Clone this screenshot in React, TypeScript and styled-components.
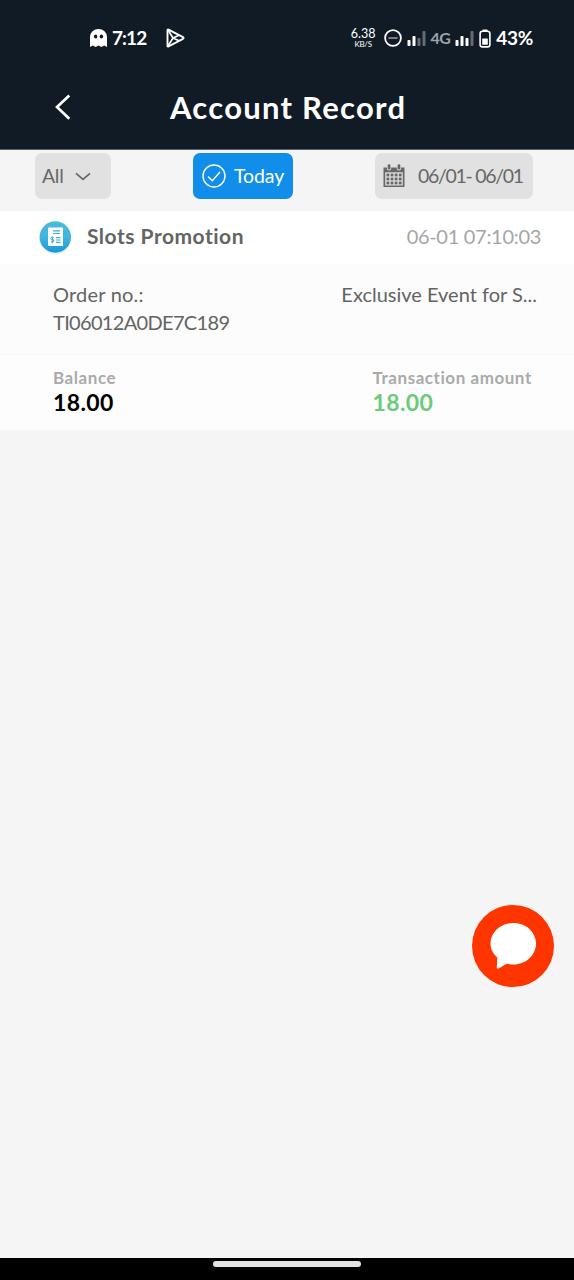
import React from "react";
import styled, { createGlobalStyle } from "styled-components";

const GlobalStyle = createGlobalStyle`
  * { box-sizing: border-box; }
  html, body { margin: 0; padding: 0; }
  body { font-family: Lato, "Open Sans", sans-serif; background: #f5f5f5; }
  svg { display: block; flex: none; }
`;

const Screen = styled.div`
  width: 574px;
  height: 1280px;
  display: flex;
  flex-direction: column;
  background: #f5f5f5;
  overflow: hidden;
  position: relative;
  font-variant-ligatures: none;
`;

const TopArea = styled.header`
  flex: none;
  height: 150px;
  background: #101b26;
  border-bottom: 1px solid #5b616a;
  color: #fff;
`;

const StatusBar = styled.div`
  height: 76px;
  padding: 0 41px 0 90px;
  display: flex;
  align-items: center;
  justify-content: space-between;
`;

const StatusGroup = styled.div`
  display: flex;
  align-items: center;
  gap: 5px;
`;

const StatusText = styled.span<{ $spacing: number }>`
  font-size: 19px;
  line-height: 24px;
  font-weight: 700;
  white-space: nowrap;
  letter-spacing: ${(p) => p.$spacing}px;
`;

const PlaySlot = styled.div`
  margin-left: 15px;
`;

const NetworkType = styled.span`
  font-size: 16px;
  line-height: 20px;
  font-weight: 700;
  color: #9da3a8;
  letter-spacing: -0.6px;
`;

const Speed = styled.div`
  display: flex;
  flex-direction: column;
  align-items: center;
  font-size: 12.5px;
  line-height: 12px;
  width: 27px;
  margin-right: 2px;
  small {
    font-size: 8px;
    line-height: 9px;
    letter-spacing: -0.3px;
  }
`;

const TitleBar = styled.div`
  height: 61px;
  display: flex;
  align-items: center;
  padding-left: 54px;
`;

const Title = styled.h1`
  margin: 0 0 0 98px;
  font-size: 31px;
  line-height: 36px;
  font-weight: 700;
  letter-spacing: 1.25px;
  white-space: nowrap;
`;

const Filters = styled.div`
  flex: none;
  height: 61px;
  padding: 3px 41px 0 35px;
  display: flex;
  justify-content: space-between;
  align-items: flex-start;
`;

const FilterButton = styled.button<{ $active?: boolean; $width: number; $pad: number; $gap: number; $spacing: number }>`
  width: ${(p) => p.$width}px;
  height: 46px;
  border: 0;
  border-radius: 7px;
  padding: 0 0 0 ${(p) => p.$pad}px;
  display: flex;
  align-items: center;
  gap: ${(p) => p.$gap}px;
  font: 400 19.5px/24px Lato, sans-serif;
  letter-spacing: ${(p) => p.$spacing}px;
  white-space: nowrap;
  color: ${(p) => (p.$active ? "#fff" : "#676767")};
  background: ${(p) => (p.$active ? "#118ee9" : "#e1e1e1")};
`;

const RecordHead = styled.div`
  flex: none;
  height: 53px;
  padding: 0 33px 2px 37px;
  background: #fff;
  display: flex;
  align-items: center;
`;

const RecordName = styled.h2`
  margin: 0 auto 2px 14px;
  font-size: 21px;
  line-height: 26px;
  font-weight: 700;
  letter-spacing: 0.5px;
  color: #636463;
`;

const RecordTime = styled.time`
  margin-bottom: 2px;
  font-size: 20px;
  line-height: 26px;
  color: #a6a6a6;
  letter-spacing: -0.3px;
`;

const RecordDetails = styled.div`
  flex: none;
  height: 91px;
  padding: 16px 37px 0 53px;
  display: flex;
  justify-content: space-between;
  background: #fcfcfc;
  border-bottom: 1px solid #f7f7f7;
  color: #636463;
  font-size: 20px;
  line-height: 28px;
`;

const DetailLine = styled.div<{ $spacing: number }>`
  letter-spacing: ${(p) => p.$spacing}px;
  white-space: nowrap;
`;

const Amounts = styled.div`
  flex: none;
  height: 75px;
  padding: 12px 0 0 53px;
  display: grid;
  grid-template-columns: 319.5px 1fr;
  background: #fdfdfd;
`;

const AmountLabel = styled.div`
  font-size: 17px;
  line-height: 22px;
  font-weight: 700;
  color: #aaa;
  letter-spacing: 0.55px;
`;

const AmountValue = styled.div<{ $color: string }>`
  font-size: 23px;
  line-height: 27px;
  font-weight: 700;
  color: ${(p) => p.$color};
  letter-spacing: 0.4px;
`;

const ChatButton = styled.button`
  position: absolute;
  left: 472px;
  top: 905px;
  width: 82px;
  height: 82px;
  padding: 0;
  border: 0;
  border-radius: 50%;
  background: #ff3500;
`;

const NavBar = styled.footer`
  flex: none;
  height: 22px;
  margin-top: auto;
  padding-top: 3px;
  background: #000;
  display: flex;
  justify-content: center;
  align-items: flex-start;
`;

const NavHandle = styled.div`
  width: 148px;
  height: 6px;
  border-radius: 3px;
  background: #e3e3e3;
`;

const Ghost = () => (
  <svg width="17" height="19" viewBox="0 0 17 19">
    <path d="M0 18V8a8.5 8 0 0 1 17 0v10l-2.8-1.5L11.4 18l-2.9-1.5L5.6 18l-2.8-1.5z" fill="#fff" />
    <ellipse cx="5.6" cy="7.5" rx="1.7" ry="1.9" fill="#101b26" />
    <ellipse cx="11.4" cy="7.5" rx="1.7" ry="1.9" fill="#101b26" />
  </svg>
);

const PlayStore = () => (
  <svg width="19" height="20" viewBox="0 0 19 20" fill="none" stroke="#fff" strokeWidth="1.9" strokeLinejoin="round">
    <path d="M1.5 2.1v15.8q0 1 1 .5L17 10.8q1.2-.8 0-1.6L2.5 1.6q-1-.5-1 .5z" />
    <path d="M2 18L7 10 13 7.200M2 2l5 8 6 2.800" strokeWidth="1.600" />
  </svg>
);

const Dnd = () => (
  <svg width="18" height="18" viewBox="0 0 18 18" fill="none" stroke="#fff">
    <circle cx="9" cy="9" r="7.900" strokeWidth="1.800" />
    <path d="M4.500 9h9" stroke="#89919a" strokeWidth="1.700" />
  </svg>
);

const Signal = ({ bars }: { bars: number }) => (
  <svg width="19" height="16" viewBox="0 0 19 16">
    {[6, 10, 8, 15].map((h, i) => (
      <rect
        key={i}
        x={i * 5 + 0.5}
        y={16 - (i === 2 && bars > 2 ? 8 : h)}
        width="3"
        height={h}
        rx="0.8"
        fill={i < bars ? "#fff" : "#646b73"}
      />
    ))}
  </svg>
);

const Battery = () => (
  <svg width="12" height="19" viewBox="0 0 12 19">
    <rect x="3.5" y="0.4" width="5" height="2" rx="0.6" fill="#fff" />
    <rect x="1.1" y="2.3" width="9.8" height="15.6" rx="2.4" fill="none" stroke="#fff" strokeWidth="1.6" />
    <rect x="3.2" y="9.6" width="5.6" height="6.2" rx="0.5" fill="#fff" />
  </svg>
);

const BackArrow = () => (
  <svg width="18" height="28" viewBox="0 0 18 28" fill="none" stroke="#fff" strokeWidth="2.7">
    <path d="M15.3 2.5L3 14l12.3 11.7" />
  </svg>
);

const ChevronDown = () => (
  <svg width="16" height="9" viewBox="0 0 16 9" fill="none" stroke="#676767" strokeWidth="1.7">
    <path d="M1 1.300l7 6L15 1.300" />
  </svg>
);

const CheckCircle = () => (
  <svg width="24" height="24" viewBox="0 0 24 24" fill="none" stroke="#fff" strokeWidth="1.4">
    <circle cx="12" cy="12" r="11" />
    <path d="M6 12.6l4.300 4.200L18 8" />
  </svg>
);

const Calendar = () => (
  <svg width="22" height="24" viewBox="0 0 22 24">
    <path d="M0.500 3.500H21.500V23H0.500z" fill="#676767" />
    <rect x="3.900" y="0" width="4.300" height="6.500" rx="2.100" fill="#e1e1e1" />
    <rect x="13.800" y="0" width="4.300" height="6.500" rx="2.100" fill="#e1e1e1" />
    <rect x="4.700" y="0.200" width="2.700" height="5.300" rx="1.350" fill="#676767" />
    <rect x="14.600" y="0.200" width="2.700" height="5.300" rx="1.350" fill="#676767" />
    <rect x="2.200" y="8.300" width="17.600" height="13.200" fill="#e1e1e1" />
    {[0, 1, 2].map((r) =>
      [0, 1, 2, 3].map((c) => (
        <rect key={`${r}-${c}`} x={3.5 + c * 4.100} y={9.600 + r * 4} width="2.800" height="2.800" fill="#676767" />
      ))
    )}
  </svg>
);

const ReceiptBadge = () => (
  <svg width="36" height="36" viewBox="0 0 36 36">
    <defs>
      <linearGradient id="badge" x1="0" y1="0" x2="0" y2="1">
        <stop offset="0" stopColor="#4cbcdb" />
        <stop offset="0.5" stopColor="#42b5dc" />
        <stop offset="1" stopColor="#1697dc" />
      </linearGradient>
    </defs>
    <circle cx="18.3" cy="19.4" r="16" fill="#e9eef0" />
    <circle cx="18.3" cy="18" r="15.700" fill="url(#badge)" />
    <path d="M12 8.500h13q1 0 1 1V27H12.500q-1.500 0-1.500-1.500V9.500q0-1 1-1z" fill="#fff" />
    <path d="M16 11.800h7M16 14.500h7M19 18.700h4.500M19 21h4.500M19 23.300h4.500" stroke="#3baed8" strokeWidth="1.200" />
    <path d="M16.800 18.500q-3-.9-3 .9t1.600 1.300 1.400 1.300-3 .9M15.300 17.300v7" stroke="#3baed8" strokeWidth="1" fill="none" />
  </svg>
);

const ChatBubble = () => (
  <svg width="82" height="82" viewBox="0 0 82 82">
    <path
      d="M41.500 18C54 18 64 27 64 38.500S54 59.500 41.500 59.500c-2.500 0-4.500-.2-6.500-.8-3 .8-5.500 3.500-8.500 4.800-1.300.4-2-.2-1.700-1.500l.6-9.500C21 49 18.500 44 18.500 38.500 18.500 27 29 18 41.500 18z"
      fill="#fff"
    />
  </svg>
);

export default function App() {
  return (
    <Screen>
      <GlobalStyle />
      <TopArea>
        <StatusBar>
          <StatusGroup>
            <Ghost />
            <StatusText $spacing={-0.9}>7:12</StatusText>
            <PlaySlot>
              <PlayStore />
            </PlaySlot>
          </StatusGroup>
          <StatusGroup>
            <Speed>
              6.38<small>KB/S</small>
            </Speed>
            <Dnd />
            <Signal bars={2} />
            <NetworkType>4G</NetworkType>
            <Signal bars={3} />
            <Battery />
            <StatusText $spacing={-0.3}>43%</StatusText>
          </StatusGroup>
        </StatusBar>
        <TitleBar>
          <BackArrow />
          <Title>Account Record</Title>
        </TitleBar>
      </TopArea>
      <Filters>
        <FilterButton $width={76} $pad={7} $gap={12} $spacing={-0.3}>
          All
          <ChevronDown />
        </FilterButton>
        <FilterButton $active $width={100} $pad={9} $gap={8} $spacing={-0.1}>
          <CheckCircle />
          Today
        </FilterButton>
        <FilterButton $width={158} $pad={8} $gap={13} $spacing={-1.3}>
          <Calendar />
          06/01- 06/01
        </FilterButton>
      </Filters>
      <RecordHead>
        <ReceiptBadge />
        <RecordName>Slots Promotion</RecordName>
        <RecordTime>06-01 07:10:03</RecordTime>
      </RecordHead>
      <RecordDetails>
        <div>
          <DetailLine $spacing={0.2}>Order no.:</DetailLine>
          <DetailLine $spacing={-0.67}>TI06012A0DE7C189</DetailLine>
        </div>
        <DetailLine $spacing={0}>Exclusive Event for S...</DetailLine>
      </RecordDetails>
      <Amounts>
        <div>
          <AmountLabel>Balance</AmountLabel>
          <AmountValue $color="#000">18.00</AmountValue>
        </div>
        <div>
          <AmountLabel>Transaction amount</AmountLabel>
          <AmountValue $color="#6ccb7b">18.00</AmountValue>
        </div>
      </Amounts>
      <ChatButton aria-label="Chat">
        <ChatBubble />
      </ChatButton>
      <NavBar>
        <NavHandle />
      </NavBar>
    </Screen>
  );
}
